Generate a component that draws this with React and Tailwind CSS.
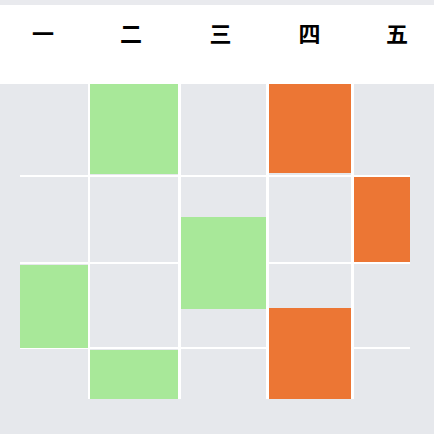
const days = ['一', '二', '三', '四', '五'];

// column widths in px, rows heights of the gray cells
const columns = [
  { w: 'w-[68px]', events: [{ top: 181, h: 83, color: 'green' }] },
  {
    w: 'w-[88px]',
    events: [
      { top: 0, h: 90, color: 'green' },
      { top: 266, h: 49, color: 'green' },
    ],
  },
  { w: 'w-[85px]', events: [{ top: 133, h: 92, color: 'green' }] },
  {
    w: 'w-[82px]',
    events: [
      { top: 0, h: 89, color: 'orange' },
      { top: 224, h: 91, color: 'orange' },
    ],
  },
  { w: 'w-[56px]', events: [{ top: 93, h: 85, color: 'orange' }] },
];

const rows = ['h-[91px]', 'h-[85px]', 'h-[83px]', 'h-[50px]'];

export default function App() {
  return (
    <div
      className="w-[434px] h-[434px] overflow-hidden bg-[#e6e8ec] flex flex-col"
      style={{ fontFamily: '"Noto Sans CJK SC", "Noto Sans", sans-serif' }}
    >
      <div className="h-[5px] bg-[#e9eaee]" />
      <div className="h-[79px] bg-white grid grid-cols-[86px_90px_89px_89px_86px] pt-[12px]">
        {days.map((d) => (
          <div key={d} className="text-center text-[22px] leading-[30px] font-bold text-black">
            {d}
          </div>
        ))}
      </div>
      <div className="pl-[20px]">
        <div className="flex gap-[2px] bg-white w-fit">
          {columns.map((col, ci) => (
            <div key={ci} className={`relative flex flex-col gap-[2px] ${col.w} ${ci > 1 ? 'ml-px' : ''}`}>
              {rows.map((h, ri) => (
                <div key={ri} className={`${h} bg-[#e6e8ec]`} />
              ))}
              {col.events.map((e, ei) => (
                <div
                  key={ei}
                  className={`absolute left-0 right-0 ${
                    e.color === 'green' ? 'bg-[#a8e899]' : 'bg-[#ec7634]'
                  }`}
                  style={{ top: e.top, height: e.h }}
                />
              ))}
            </div>
          ))}
        </div>
      </div>
    </div>
  );
}
